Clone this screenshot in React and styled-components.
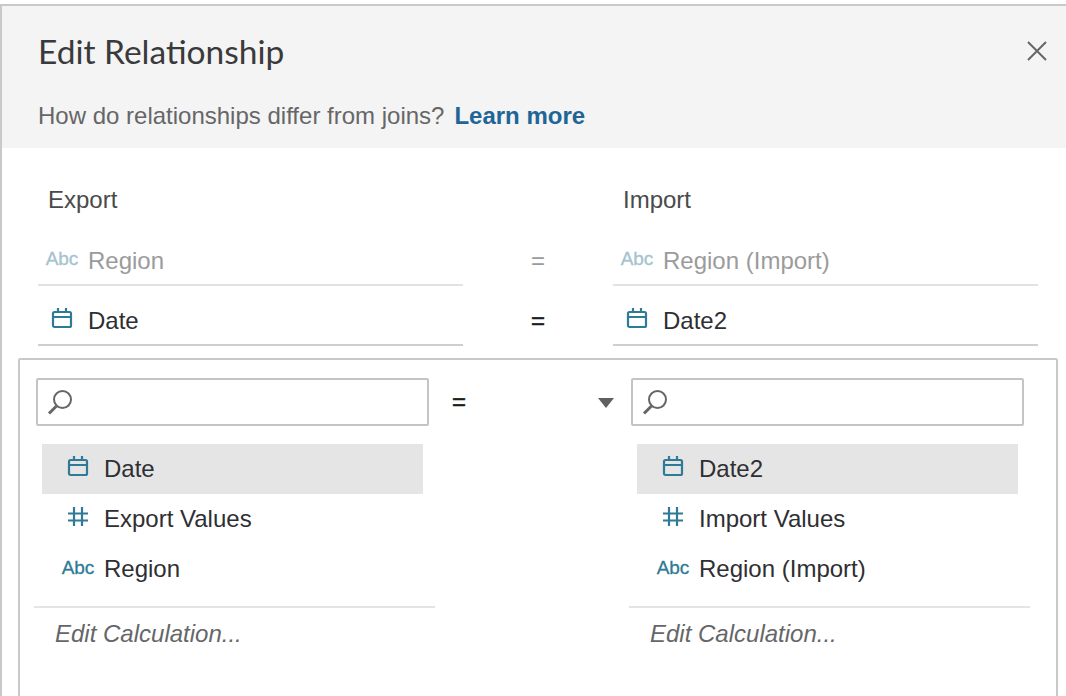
import React from 'react';
import styled, { createGlobalStyle } from 'styled-components';

const GlobalStyle = createGlobalStyle`
  html, body {
    margin: 0;
    padding: 0;
    background: #fff;
    height: 696px;
    overflow: hidden;
  }
  * { box-sizing: border-box; }
`;

const Dialog = styled.div`
  margin-top: 4px;
  height: 692px;
  border-top: 2px solid #c9c9c9;
  border-left: 2px solid #c9c9c9;
  font-family: "Liberation Sans", Arial, sans-serif;
  font-size: 24px;
  color: #2f2f33;
  overflow: hidden;
`;

const Header = styled.header`
  position: relative;
  height: 142px;
  background: #f4f4f4;
  padding: 25px 0 0 36px;
`;

const Title = styled.h1`
  margin: 0;
  font-family: Lato, sans-serif;
  font-weight: 400;
  font-size: 33.5px;
  line-height: 40px;
  color: #3a3a3c;
`;

const Hint = styled.p`
  margin: 30px 0 0;
  font-size: 24px;
  line-height: 30px;
  color: #666668;
`;

const LearnMore = styled.a`
  margin-left: 10px;
  font-weight: 700;
  color: #1f6596;
`;

const CloseIcon = styled.svg`
  position: absolute;
  top: 35px;
  right: 19px;
  width: 20px;
  height: 20px;
  stroke: #666;
  stroke-width: 2;
`;

const Existing = styled.section`
  display: grid;
  grid-template-columns: 425px 150px 425px;
  margin-left: 36px;
`;

const TableName = styled.div`
  height: 91px;
  padding: 37px 0 0 10px;
  line-height: 30px;
  color: #4a4a4a;
`;

const Spacer = styled.div``;

const Pair = styled.div`
  display: flex;
  align-items: center;
  height: 47px;
  padding-bottom: 2px;
  margin-bottom: ${p => (p.$muted ? 13 : 12)}px;
  border-bottom: 2px solid ${p => (p.$muted ? '#e2e2e2' : '#cfcfcf')};
  color: ${p => (p.$muted ? '#9b9b9b' : '#2f2f33')};
`;

const Equals = styled.div`
  height: 47px;
  padding-bottom: 4px;
  display: flex;
  align-items: center;
  justify-content: center;
  color: ${p => (p.$muted ? '#9b9b9b' : '#1c1c1c')};
  -webkit-text-stroke: ${p => (p.$muted ? 0 : 0.5)}px;
`;

const IconSlot = styled.span`
  display: flex;
  justify-content: center;
  flex: none;
  width: 48px;
  margin-right: 2px;
  color: ${p => (p.$muted ? '#a3c3cf' : '#2f7a96')};
`;

const AbcLabel = styled.span`
  font-size: 19px;
  line-height: 22px;
  margin-top: -3px;
  -webkit-text-stroke: 0.3px;
`;

const Svg = styled.svg`
  width: 22px;
  height: 22px;
  margin-top: -4px;
  fill: none;
  stroke: currentColor;
  stroke-width: 2.2;
`;

const Panel = styled.section`
  display: grid;
  grid-template-columns: 401px 194px 401px;
  height: 400px;
  margin: 0 8px 0 16px;
  padding: 18px 0 0 14px;
  border: 2px solid #c9c9c9;
  border-radius: 2px;
`;

const Column = styled.div`
  display: flex;
  flex-direction: column;
`;

const SearchBox = styled.div`
  display: flex;
  align-items: center;
  width: 393px;
  height: 48px;
  margin: 0 0 18px 2px;
  padding-left: 9px;
  border: 2px solid #c4c4c4;
  border-radius: 2px;
`;

const SearchIcon = styled.svg`
  width: 26px;
  height: 26px;
  fill: none;
  stroke: #666;
  stroke-width: 2;
`;

const Middle = styled.div`
  display: flex;
  justify-content: space-between;
  align-items: center;
  height: 48px;
  padding: 0 15px 0 17px;
  color: #1c1c1c;
  -webkit-text-stroke: 0.5px;
`;

const Caret = styled.span`
  width: 0;
  height: 0;
  margin-top: 2px;
  border-left: 8px solid transparent;
  border-right: 8px solid transparent;
  border-top: 10px solid #606060;
`;

const Field = styled.div`
  display: flex;
  align-items: center;
  width: 381px;
  height: 50px;
  margin-left: 8px;
  padding-left: 12px;
  background: ${p => (p.$selected ? '#e5e5e5' : 'transparent')};
`;

const Divider = styled.hr`
  width: 401px;
  margin: 12px 0 0;
  border: 0;
  border-top: 2px solid #e4e4e4;
`;

const EditCalc = styled.div`
  margin: 11px 0 0 21px;
  line-height: 30px;
  font-style: italic;
  color: #666668;
`;

const Calendar = () => (
  <Svg viewBox="0 0 22 22">
    <rect x="2" y="4" width="18" height="15" rx="1.5" />
    <path d="M2 9h18M7 0v5M15 0v5" />
  </Svg>
);

const Hash = () => (
  <Svg viewBox="0 0 22 22">
    <path d="M7 1v19M15 1v19M1 7.5h20M1 14.5h20" />
  </Svg>
);

const Abc = () => <AbcLabel>Abc</AbcLabel>;

const Search = () => (
  <SearchIcon viewBox="0 0 26 26">
    <circle cx="15.5" cy="10.5" r="8.5" />
    <path d="M9.5 17L2 24.5" strokeWidth="3" />
  </SearchIcon>
);

function PickerColumn({ fields }) {
  return (
    <Column>
      <SearchBox><Search /></SearchBox>
      {fields.map(f => (
        <Field key={f.name} $selected={f.selected}>
          <IconSlot>{f.icon}</IconSlot>
          <span>{f.name}</span>
        </Field>
      ))}
      <Divider />
      <EditCalc>Edit Calculation...</EditCalc>
    </Column>
  );
}

export default function App() {
  return (
    <>
      <GlobalStyle />
      <Dialog>
        <Header>
          <Title>Edit Relationship</Title>
          <Hint>
            How do relationships differ from joins?
            <LearnMore>Learn more</LearnMore>
          </Hint>
          <CloseIcon viewBox="0 0 20 20">
            <path d="M1 1l18 18M19 1L1 19" />
          </CloseIcon>
        </Header>
        <Existing>
          <TableName>Export</TableName>
          <Spacer />
          <TableName>Import</TableName>
          <Pair $muted><IconSlot $muted><Abc /></IconSlot>Region</Pair>
          <Equals $muted>=</Equals>
          <Pair $muted><IconSlot $muted><Abc /></IconSlot>Region (Import)</Pair>
          <Pair><IconSlot><Calendar /></IconSlot>Date</Pair>
          <Equals>=</Equals>
          <Pair><IconSlot><Calendar /></IconSlot>Date2</Pair>
        </Existing>
        <Panel>
          <PickerColumn
            fields={[
              { name: 'Date', icon: <Calendar />, selected: true },
              { name: 'Export Values', icon: <Hash /> },
              { name: 'Region', icon: <Abc /> },
            ]}
          />
          <Middle>
            <span>=</span>
            <Caret />
          </Middle>
          <PickerColumn
            fields={[
              { name: 'Date2', icon: <Calendar />, selected: true },
              { name: 'Import Values', icon: <Hash /> },
              { name: 'Region (Import)', icon: <Abc /> },
            ]}
          />
        </Panel>
      </Dialog>
    </>
  );
}
